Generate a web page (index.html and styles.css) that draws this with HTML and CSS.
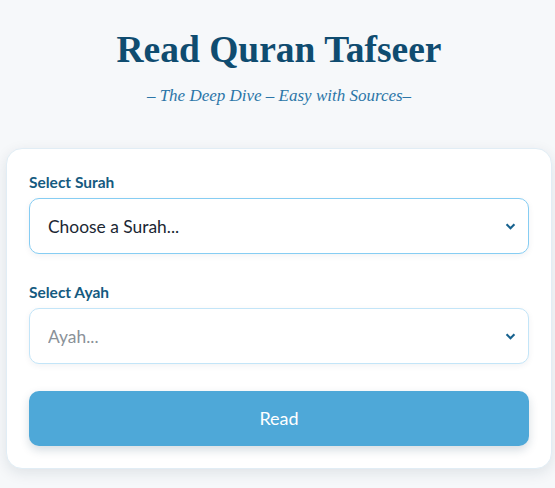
FILE: index.html
```html
<!DOCTYPE html>
<html lang="en">
<head>
    <meta charset="UTF-8">
    <meta name="viewport" content="width=device-width, initial-scale=1.0">
    <title>Read Quran Tafseer</title>
    <link rel="stylesheet" href="styles.css">
</head>
<body>
    <header class="page-header">
        <h1>Read Quran Tafseer</h1>
        <p class="tagline">– The Deep Dive – Easy with Sources–</p>
    </header>

    <!-- Formulaire de sélection sourate / verset -->
    <form class="reader-card" id="tafseerForm">
        <div class="field">
            <label for="surahSelect">Select Surah</label>
            <div class="select-wrap">
                <select id="surahSelect" class="select-box">
                    <option value="">Choose a Surah...</option>
                    <option value="1">1. Al-Fatiha</option>
                    <option value="2">2. Al-Baqarah</option>
                </select>
                <svg class="chevron" viewBox="0 0 12 8" width="11" height="7"><path d="M1.5 1.5 L6 6 L10.5 1.5" fill="none" stroke="#17628f" stroke-width="2.4"/></svg>
            </div>
        </div>

        <div class="field">
            <label for="ayahSelect">Select Ayah</label>
            <div class="select-wrap">
                <select id="ayahSelect" class="select-box select-muted" disabled>
                    <option value="">Ayah...</option>
                </select>
                <svg class="chevron" viewBox="0 0 12 8" width="11" height="7"><path d="M1.5 1.5 L6 6 L10.5 1.5" fill="none" stroke="#17628f" stroke-width="2.4"/></svg>
            </div>
        </div>

        <button type="submit" class="read-btn">Read</button>
    </form>
</body>
</html>
```

FILE: styles.css
```css
body {
    font-family: Lato, "Open Sans", sans-serif;
    margin: 0;
    padding: 0 3px 20px 6px;
    background-color: #f6f8fa;
    color: #1b2733;
}

.page-header {
    text-align: center;
    padding-top: 25px;
    margin-bottom: 42px;
}

h1 {
    font-family: "Liberation Serif", "DejaVu Serif", serif;
    font-weight: bold;
    font-size: 37.5px;
    color: #0f4c70;
    margin: 0;
    line-height: 50px;
}

.tagline {
    font-family: "Liberation Serif", serif;
    font-style: italic;
    font-size: 17px;
    color: #2c76a8;
    margin: 11px 0 0;
}

.reader-card {
    background-color: #ffffff;
    border: 1px solid #e1edf5;
    border-radius: 16px;
    box-shadow: 0 4px 14px rgba(20, 40, 60, 0.10);
    padding: 24px 22px 22px;
    display: flex;
    flex-direction: column;
}

.field {
    display: flex;
    flex-direction: column;
    margin-bottom: 29px;
}

.field label {
    font-size: 15.5px;
    font-weight: bold;
    color: #155a80;
    margin-bottom: 6px;
    line-height: 19px;
}

.select-wrap {
    position: relative;
}

.select-box {
    appearance: none;
    -webkit-appearance: none;
    width: 100%;
    height: 56px;
    padding: 0 40px 0 18px;
    font-family: Lato, sans-serif;
    font-size: 17.4px;
    color: #1b2733;
    background-color: #ffffff;
    border: 1px solid #86cdf3;
    border-radius: 10px;
    box-shadow: 0 2px 6px rgba(20, 40, 60, 0.06);
}

.select-muted {
    color: #8a9198;
    border-color: #c3e5f8;
    opacity: 1;
}

.chevron {
    position: absolute;
    right: 13px;
    top: 25px;
    pointer-events: none;
}

.read-btn {
    height: 55px;
    margin-top: -2px;
    padding-bottom: 2px;
    font-family: Lato, sans-serif;
    font-size: 18px;
    color: #ffffff;
    background-color: #4ea8d8;
    border: none;
    border-radius: 10px;
    box-shadow: 0 4px 10px rgba(20, 60, 90, 0.18);
    cursor: pointer;
}

.read-btn:hover {
    background-color: #3f9bcd;
}
```
